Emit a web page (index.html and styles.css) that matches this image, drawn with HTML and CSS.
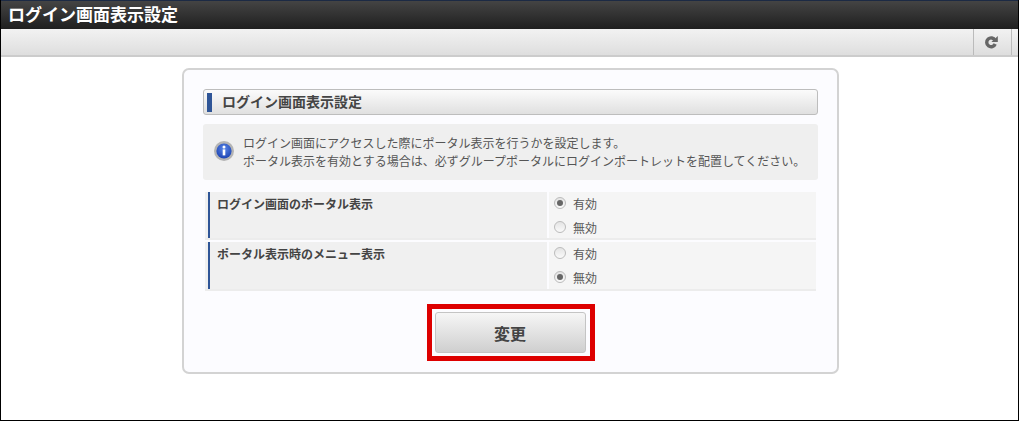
FILE: index.html
```html
<!DOCTYPE html>
<html lang="ja">
<head>
<meta charset="utf-8">
<title>ログイン画面表示設定</title>
<link rel="stylesheet" href="styles.css">
</head>
<body>
<div class="frame">
  <header class="titlebar"><h1 class="title">ログイン画面表示設定</h1></header>
  <div class="toolbar">
    <div class="tool">
      <svg class="reload" viewBox="0 0 14 14" width="14" height="14"><path d="M11 5.2A4.4 4.4 0 1 0 11.2 9" fill="none" stroke="#666" stroke-width="3.4"/><path d="M7.4 7h6.4V.9z" fill="#666"/></svg>
    </div>
  </div>
  <main class="main">
    <section class="card">
      <h2 class="heading"><span class="heading-mark"></span><span class="heading-text">ログイン画面表示設定</span></h2>
      <div class="info">
        <svg class="info-icon" viewBox="0 0 20 20" width="20" height="20">
          <defs><radialGradient id="ig" cx="50%" cy="35%" r="65%"><stop offset="0" stop-color="#5a86e6"/><stop offset="1" stop-color="#1c44b4"/></radialGradient></defs>
          <circle cx="10" cy="10" r="10" fill="#b4b4b4"/>
          <circle cx="10" cy="10" r="7.6" fill="url(#ig)"/>
          <circle cx="10" cy="6" r="1.5" fill="#fff"/>
          <rect x="8.7" y="8.4" width="2.6" height="6" fill="#fff"/>
        </svg>
        <p class="info-text">ログイン画面にアクセスした際にポータル表示を行うかを設定します。<br>ポータル表示を有効とする場合は、必ずグループポータルにログインポートレットを配置してください。</p>
      </div>
      <div class="form">
        <div class="row row-first">
          <div class="label"><span class="label-text">ログイン画面のポータル表示</span></div>
          <div class="field">
            <label class="option"><span class="radio radio-on"></span>有効</label>
            <label class="option"><span class="radio"></span>無効</label>
          </div>
        </div>
        <div class="row row-second">
          <div class="label"><span class="label-text">ポータル表示時のメニュー表示</span></div>
          <div class="field">
            <label class="option"><span class="radio"></span>有効</label>
            <label class="option"><span class="radio radio-on"></span>無効</label>
          </div>
        </div>
      </div>
      <div class="actions">
        <div class="highlight"><button class="submit" type="button">変更</button></div>
      </div>
    </section>
  </main>
</div>
</body>
</html>
```

FILE: styles.css
```css
* { box-sizing: border-box; }
html, body { margin: 0; padding: 0; }
body {
  width: 1019px;
  height: 421px;
  overflow: hidden;
  background: #fff;
  font-family: "Noto Sans CJK JP", "Liberation Sans", sans-serif;
  color: #555;
}
.frame {
  height: 421px;
  border-left: 1px solid #000;
  border-right: 1px solid #000;
  border-bottom: 1px solid #000;
  display: flex;
  flex-direction: column;
}
.titlebar {
  height: 29px;
  flex: none;
  border-top: 1px solid #1c2a44;
  background: linear-gradient(#444, #1f1f1f);
  padding-left: 7px;
  padding-bottom: 2px;
  display: flex;
  align-items: center;
}
.title {
  margin: 0;
  font-size: 17px;
  font-weight: 700;
  line-height: 26px;
  color: #fff;
}
.toolbar {
  height: 28px;
  flex: none;
  background: linear-gradient(#f2f2f2, #dedede);
  border-bottom: 2px solid #ccc;
  display: flex;
  justify-content: flex-end;
  padding-right: 6px;
}
.tool {
  width: 39px;
  border-left: 1px solid #bbb;
  border-right: 1px solid #bbb;
  padding-right: 3px;
  display: flex;
  align-items: center;
  justify-content: center;
}
.main {
  flex: 1;
  padding: 11px 179px 0 181px;
}
.card {
  height: 306px;
  border: 2px solid #d3d3d3;
  border-radius: 7px;
  background: #fcfcff;
  padding: 19px 19px 0;
}
.heading {
  margin: 0;
  height: 26px;
  display: flex;
  align-items: center;
  border: 1px solid #bdbdbd;
  border-radius: 3px;
  background: linear-gradient(#fbfbfb, #e0e0e0);
  font-size: 14px;
  font-weight: 700;
  color: #444;
  padding-left: 3px;
}
.heading-text { line-height: 20px; margin-top: -2px; }
.heading-mark {
  width: 5px;
  height: 19px;
  background: #2f5597;
  margin-right: 10px;
}
.info {
  margin-top: 9px;
  height: 56px;
  border-radius: 3px;
  background: #efefef;
  display: flex;
  align-items: center;
  padding-left: 11px;
}
.info-icon { flex: none; margin-right: 9px; margin-top: -2px; }
.info-text {
  margin: 0;
  font-size: 12px;
  line-height: 18px;
  color: #555;
}
.form {
  margin: 12px 2px 0;
  display: flex;
  flex-direction: column;
  gap: 2px;
}
.row {
  display: flex;
  gap: 2px;
  border-bottom: 2px solid #ececec;
}
.row-first { height: 48px; }
.row-second { height: 49px; }
.label {
  width: 342px;
  flex: none;
  background: #f0f0f0;
  padding-left: 3px;
}
.label-text {
  display: block;
  height: 100%;
  border-left: 2px solid #2f5597;
  padding: 3px 0 0 7px;
  font-size: 12px;
  font-weight: 700;
  line-height: 18px;
  color: #444;
}
.field {
  flex: 1;
  background: #f5f5f5;
  padding: 2px 0 0 5px;
  display: flex;
  flex-direction: column;
  gap: 6px;
}
.option {
  display: flex;
  align-items: center;
  height: 18px;
  font-size: 12px;
  color: #555;
}
.radio {
  width: 12px;
  height: 12px;
  border-radius: 50%;
  border: 1px solid #bbb;
  background: linear-gradient(#e4e4e4, #fafafa);
  margin-right: 7px;
  display: flex;
  align-items: center;
  justify-content: center;
}
.radio-on::after {
  content: "";
  width: 6px;
  height: 6px;
  border-radius: 50%;
  background: #666;
}
.actions {
  margin-top: 13px;
  display: flex;
  justify-content: center;
}
.highlight {
  width: 168px;
  height: 57px;
  border: 5px solid #dd0000;
  padding: 3px 4px 3px 3px;
}
.submit {
  display: block;
  width: 100%;
  height: 41px;
  border: 1px solid #c4c4c4;
  border-radius: 3px;
  background: linear-gradient(#f6f6f6, #cfcfcf);
  font-family: inherit;
  font-size: 16px;
  font-weight: 700;
  color: #444;
  padding: 0;
}
```
